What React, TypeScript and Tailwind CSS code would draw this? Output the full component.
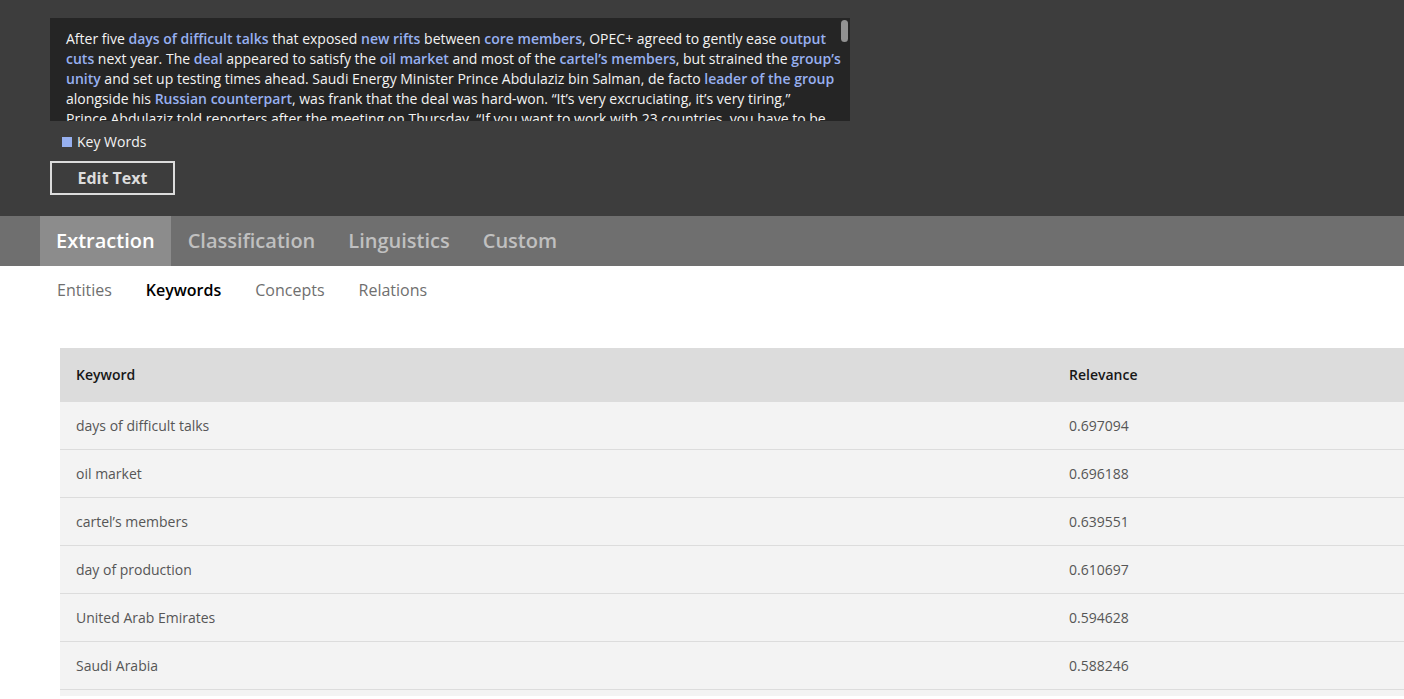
import type { ReactNode } from 'react';

const categories = ['Extraction', 'Classification', 'Linguistics', 'Custom'];
const views = ['Entities', 'Keywords', 'Concepts', 'Relations'];

const keywords = [
  { text: 'days of difficult talks', relevance: '0.697094' },
  { text: 'oil market', relevance: '0.696188' },
  { text: 'cartel’s members', relevance: '0.639551' },
  { text: 'day of production', relevance: '0.610697' },
  { text: 'United Arab Emirates', relevance: '0.594628' },
  { text: 'Saudi Arabia', relevance: '0.588246' },
];

function K({ children }: { children: ReactNode }) {
  return <strong className="font-semibold text-[#97b0f0]">{children}</strong>;
}

function SourceText() {
  return (
    <div className="relative max-w-[800px] bg-[#252525]">
      <div className="h-[103px] overflow-hidden pt-[11px] pr-2 pl-4">
        <p className="text-sm leading-5 text-[#f3f3f3]">
          After five <K>days of difficult talks</K> that exposed <K>new rifts</K> between <K>core members</K>, OPEC+
          agreed to gently ease <K>output cuts</K> next year. The <K>deal</K> appeared to satisfy the{' '}
          <K>oil market</K> and most of the <K>cartel’s members</K>, but strained the <K>group’s unity</K> and set up
          testing times ahead. Saudi Energy Minister Prince Abdulaziz bin Salman, de facto{' '}
          <K>leader of the group</K> alongside his <K>Russian counterpart</K>, was frank that the deal was hard-won.
          “It’s very excruciating, it’s very tiring,”{' '}
          <span className="whitespace-nowrap">Prince Abdulaziz</span> told reporters after the meeting on Thursday.
          “If you want to work with 23 countries, you have to be
        </p>
      </div>
      <div className="absolute top-0.5 right-0.5 h-[22px] w-[7px] rounded-full bg-[#929292]" />
    </div>
  );
}

export default function App() {
  return (
    <div className="flex h-screen flex-col overflow-hidden bg-white pb-[3px] font-['Open_Sans','Noto_Sans',sans-serif]">
      <header className="shrink-0 bg-[#3d3d3d] px-[50px] pt-[18px] pb-[21px]">
        <SourceText />
        <div className="flex h-10 items-center gap-[5px] pt-0.5 pl-3 text-sm text-[#f3f3f3]">
          <span className="size-2.5 bg-[#97b0f0]" />
          Key Words
        </div>
        <button
          type="button"
          className="flex h-[34px] w-[125px] items-center justify-center border-2 border-[#dcdcdc] text-base font-bold text-[#dcdcdc]"
        >
          Edit Text
        </button>
      </header>

      <nav aria-label="Categories" className="flex h-[50px] shrink-0 gap-px bg-[#6f6f6f] pl-10 text-xl font-semibold">
        {categories.map((name, i) => (
          <a
            key={name}
            href="#"
            aria-current={i === 0 ? 'page' : undefined}
            className={i === 0 ? 'flex items-center bg-[#8c8c8c] px-4 text-white' : 'flex items-center px-4 text-[#c0c0c0]'}
          >
            {name}
          </a>
        ))}
      </nav>

      <nav aria-label="Views" className="flex h-12 shrink-0 items-center gap-[34px] pl-[57px] text-base">
        {views.map((name) => (
          <a
            key={name}
            href="#"
            className={name === 'Keywords' ? 'font-semibold text-black' : 'text-[#6f6f6f]'}
          >
            {name}
          </a>
        ))}
      </nav>

      <main className="mt-[34px] min-h-0 flex-1 overflow-hidden pl-[60px]">
        <table className="w-full table-fixed border-separate border-spacing-0 text-left text-sm">
          <colgroup>
            <col />
            <col className="w-[351px]" />
          </colgroup>
          <thead>
            <tr className="h-[54px] bg-[#dcdcdc] text-[#171717]">
              <th className="px-4 font-semibold">Keyword</th>
              <th className="px-4 font-semibold">Relevance</th>
            </tr>
          </thead>
          <tbody className="text-[#565656]">
            {keywords.map((k) => (
              <tr key={k.text} className="h-12 bg-[#f3f3f3]">
                <td className="border-b border-[#dcdcdc] px-4">{k.text}</td>
                <td className="border-b border-[#dcdcdc] px-4">{k.relevance}</td>
              </tr>
            ))}
            <tr className="h-12 bg-[#f3f3f3]">
              <td className="px-4" />
              <td className="px-4" />
            </tr>
          </tbody>
        </table>
      </main>
    </div>
  );
}
